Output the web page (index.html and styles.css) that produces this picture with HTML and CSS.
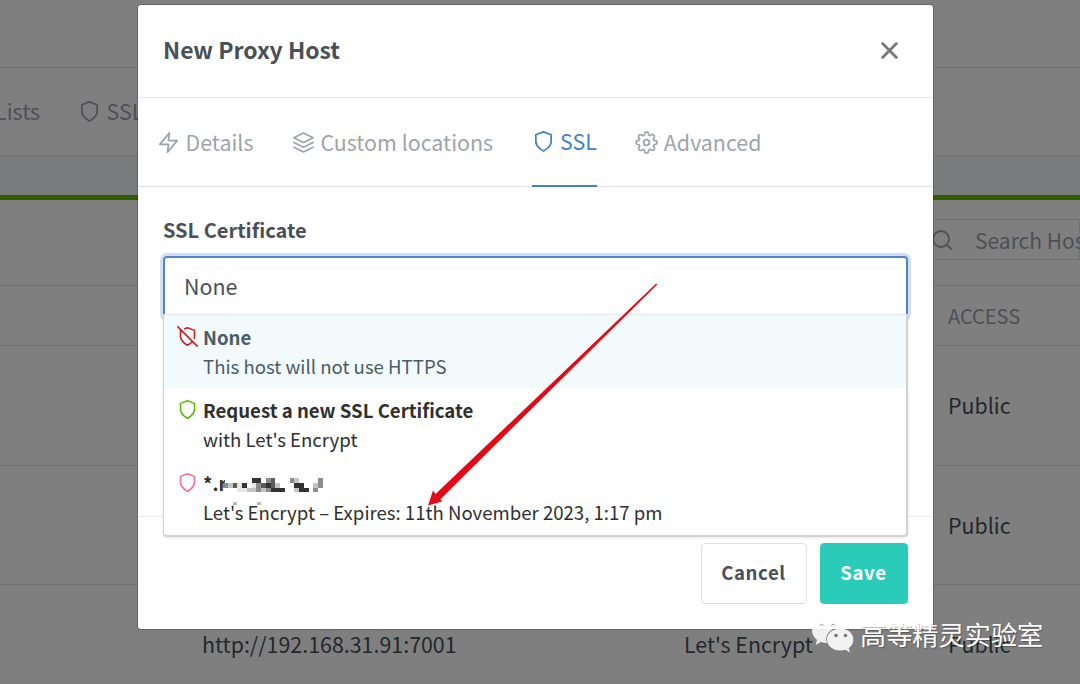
FILE: index.html
```html
<!DOCTYPE html>
<html lang="en">
<head>
<meta charset="utf-8">
<title>New Proxy Host</title>
<link rel="stylesheet" href="styles.css">
</head>
<body>
<div class="page">
  <div class="topbar"></div>
  <nav class="nav">
    <span class="nav-lists">Lists</span>
    <svg class="nav-icon" viewBox="0 0 24 24"><path d="M12 22s8-4 8-10V5l-8-3-8 3v7c0 6 8 10 8 10z"/></svg>
    <span class="nav-ssl">SSL</span>
  </nav>
  <div class="gap"></div>
  <section class="card">
    <div class="toolbar">
      <div class="search">
        <svg class="search-icon" viewBox="0 0 24 24"><circle cx="11" cy="11" r="8"/><path d="M21 21l-4.35-4.35"/></svg>
        <span class="search-text">Search Host…</span>
      </div>
    </div>
    <div class="row head"><span class="c3">ACCESS</span></div>
    <div class="row"><span class="c3">Public</span></div>
    <div class="row"><span class="c3">Public</span></div>
    <div class="row last"><span class="c1">http://192.168.31.91:7001</span><span class="c2">Let's Encrypt</span><span class="c3">Public</span></div>
  </section>
</div>

<div class="overlay">
  <div class="modal">
    <header class="modal-head">
      <h1 class="title">New Proxy Host</h1>
      <svg class="close" viewBox="0 0 16 16"><path d="M1.500 1.500l13 13M14.500 1.500l-13 13"/></svg>
    </header>
    <div class="tabs">
      <div class="tab tab-details"><svg class="ti" viewBox="0 0 24 24"><path d="M13 2L3 14h9l-1 8 10-12h-9l1-8z"/></svg><span>Details</span></div>
      <div class="tab tab-custom"><svg class="ti" viewBox="0 0 24 24"><path d="M12 2L2 7l10 5 10-5-10-5zM2 17l10 5 10-5M2 12l10 5 10-5"/></svg><span>Custom locations</span></div>
      <div class="tab tab-ssl"><svg class="ti" viewBox="0 0 24 24"><path d="M12 22s8-4 8-10V5l-8-3-8 3v7c0 6 8 10 8 10z"/></svg><span>SSL</span></div>
      <div class="tab tab-advanced"><svg class="ti" viewBox="0 0 24 24"><circle cx="12" cy="12" r="3"/><path d="M19.4 15a1.65 1.65 0 0 0 .33 1.82l.06.06a2 2 0 0 1 0 2.83 2 2 0 0 1-2.83 0l-.06-.06a1.65 1.65 0 0 0-1.82-.33 1.65 1.65 0 0 0-1 1.51V21a2 2 0 0 1-2 2 2 2 0 0 1-2-2v-.09A1.65 1.65 0 0 0 9 19.4a1.65 1.65 0 0 0-1.82.33l-.06.06a2 2 0 0 1-2.83 0 2 2 0 0 1 0-2.83l.06-.06a1.65 1.65 0 0 0 .33-1.82 1.65 1.65 0 0 0-1.51-1H3a2 2 0 0 1-2-2 2 2 0 0 1 2-2h.09A1.65 1.65 0 0 0 4.6 9a1.65 1.65 0 0 0-.33-1.82l-.06-.06a2 2 0 0 1 0-2.83 2 2 0 0 1 2.83 0l.06.06a1.65 1.65 0 0 0 1.82.33H9a1.65 1.65 0 0 0 1-1.51V3a2 2 0 0 1 2-2 2 2 0 0 1 2 2v.09a1.65 1.65 0 0 0 1 1.51 1.65 1.65 0 0 0 1.82-.33l.06-.06a2 2 0 0 1 2.83 0 2 2 0 0 1 0 2.83l-.06.06a1.65 1.65 0 0 0-.33 1.82V9a1.65 1.65 0 0 0 1.51 1H21a2 2 0 0 1 2 2 2 2 0 0 1-2 2h-.09a1.65 1.65 0 0 0-1.51 1z"/></svg><span>Advanced</span></div>
    </div>
    <div class="modal-body">
      <label class="label">SSL Certificate</label>
      <div class="select">
        <div class="select-input"><span>None</span></div>
        <div class="dropdown">
          <div class="option active">
            <svg class="oi red" viewBox="0 0 24 24"><path d="M19.690 14a6.900 6.900 0 0 0 .31-2V5l-8-3-3.160 1.180M4.730 4.730L4 5v7c0 6 8 10 8 10a20.290 20.290 0 0 0 5.620-4.380M1 1l22 22"/></svg>
            <div><div class="ot">None</div><div class="od">This host will not use HTTPS</div></div>
          </div>
          <div class="option">
            <svg class="oi green" viewBox="0 0 24 24"><path d="M12 22s8-4 8-10V5l-8-3-8 3v7c0 6 8 10 8 10z"/></svg>
            <div><div class="ot">Request a new SSL Certificate</div><div class="od">with Let's Encrypt</div></div>
          </div>
          <div class="option">
            <svg class="oi pink" viewBox="0 0 24 24"><path d="M12 22s8-4 8-10V5l-8-3-8 3v7c0 6 8 10 8 10z"/></svg>
            <div>
              <div class="ot domain">*.r
                <svg class="mosaic" viewBox="0 0 21 3" preserveAspectRatio="none">
                  <path fill="#fff" d="M.5 0h20.500v3h-20.500z"/>
                  <path fill="#333" d="M6 0h2v1h-2zM4 1h1v1h-1zM9 1h1v1h-1zM15 1h2v1h-2zM10 2h3v1h-3zM16 2h2v1h-2z"/>
                  <path fill="#5c5c5c" d="M10 0h1v1h-1zM2 1h1v1h-1zM8 1h1v1h-1zM10 1h1v1h-1z"/>
                  <path fill="#8c8c8c" d="M9 0h1v1h-1zM14 0h1v1h-1zM20 0h1v1h-1zM0 1h1v1h-1zM7 1h1v1h-1zM20 1h1v1h-1zM7 2h1v1h-1zM9 2h1v1h-1zM19 2h1v1h-1z"/>
                  <path fill="#c4c4c4" d="M15 0h1v1h-1zM1 1h1v1h-1zM11 1h1v1h-1zM19 1h1v1h-1zM5 2h2v1h-2zM8 2h1v1h-1zM15 2h1v1h-1z"/>
                  <path fill="#e6e6e6" d="M3 1h1v1h-1zM6 1h1v1h-1zM3 2h2v1h-2z"/>
                  <path fill="#b8b8b8" d="M2.100 5.100h.9v.5h-.9zM7.100 5.100h.9v.5h-.9z"/>
                </svg>
              </div>
              <div class="od">Let's Encrypt – Expires: 11th November 2023, 1:17 pm</div>
            </div>
          </div>
        </div>
      </div>
    </div>
    <footer class="modal-foot">
      <div class="btn cancel">Cancel</div>
      <div class="btn save">Save</div>
    </footer>
  </div>
</div>

<svg class="arrow" viewBox="0 0 1080 684"><path d="M656.200 283.600L657.300 284.500L440.500 499.200L442 501.500L428 505.500L433 490.500L435.500 494Z" fill="#e30a17"/></svg>

<div class="watermark">
  <svg class="wechat" viewBox="0 0 44 36">
    <path d="M16 1C7 1 1 6.500 1 13.500c0 4 2 7 5 9.500l-1.500 5 5.500-3c2 .6 4 .9 6 .9l-.8-3.400c0-6 5-11.800 14.800-11.900C29 5 23 1 16 1z" fill="#fff" fill-opacity=".88"/>
    <path d="M29.500 11.500C21.500 11.500 16 16.500 16 22.500S21.500 33.500 29.500 33.500c1.700 0 3.300-.2 4.800-.7l4.700 2.700-1.300-4.300c2.800-2 4.600-5 4.600-8.700 0-6-5-11-12.800-11z" fill="#f2f2f2"/>
    <g fill="#777"><circle cx="25" cy="18.500" r="1.800"/><circle cx="34.500" cy="18.500" r="1.800"/></g>
    <g fill="none" stroke="#999" stroke-width="1"><path d="M9 8.500a1.800 1.800 0 0 1 3.400-.2M20.500 8.500a1.800 1.800 0 0 1 3.400-.2"/></g>
  </svg>
  <span>高等精灵实验室</span>
</div>
</body>
</html>
```
FILE: styles.css
```css
* { box-sizing: border-box; }
body {
  margin: 0;
  width: 1080px;
  height: 684px;
  overflow: hidden;
  position: relative;
  background: #f5f7fb;
  color: #495057;
  font: 21.400px/30px "Noto Sans CJK SC", "Open Sans", sans-serif;
  white-space: nowrap;
}
svg { fill: none; stroke: currentColor; stroke-width: 1.800; stroke-linecap: round; stroke-linejoin: round; flex: none; display: block; }

.page { height: 684px; overflow: hidden; }
.topbar { height: 68px; background: #fff; border-bottom: 1px solid #e0e2e6; }
.nav { height: 88px; display: flex; align-items: center; background: #fff; border-bottom: 1px solid #e0e2e6; color: #9aa0ac; }
.nav span { padding-bottom: 1px; }
.nav-lists { width: 40px; display: flex; justify-content: flex-end; }
.nav-icon { width: 23px; height: 23px; margin: 0 6px 0 37.500px; }
.gap { height: 39px; }
.card { background: #fff; border-top: 5px solid #5eba00; }
.toolbar { height: 86px; border-bottom: 1px solid #e0e2e6; padding-top: 19px; }
.search { height: 41px; margin-left: 900px; border: 1px solid #e0e2e6; display: flex; align-items: center; color: #9aa0ac; font-size: 21px; }
.search-icon { width: 24px; height: 24px; margin: 0 21px 0 29px; }
.row { height: 119.500px; display: grid; grid-template-columns: 482px 264px 1fr; padding-left: 202px; align-items: center; border-bottom: 1px solid #e0e2e6; }
.head { height: 60px; color: #9aa0ac; font-size: 20px; }
.last { padding-bottom: 1px; }
.c1 { grid-column: 1; }
.c2 { grid-column: 2; }
.c3 { grid-column: 3; }

.overlay { position: absolute; inset: 0; background: rgba(0,0,0,.5); padding: 5px 0 0 137.500px; }
.modal { width: 795.500px; height: 624px; background: #fff; border-radius: 3px; box-shadow: 0 0 0 1px rgba(0,0,0,.2); }
.modal-head { height: 93px; display: flex; justify-content: space-between; align-items: center; padding: 0 35.500px 3px 25.500px; border-bottom: 1px solid #e6e7ea; }
.title { margin: 0; padding-bottom: 2px; font-size: 22.900px; font-weight: 700; }
.close { width: 17px; height: 17px; color: #777; stroke-width: 2.600; position: relative; top: .5px; }

.tabs { height: 89px; display: flex; padding: 0 0 0 19.500px; border-bottom: 1px solid #dfe1e5; color: #9fa4aa; }
.tab { display: flex; align-items: center; height: 89px; gap: 5.500px; padding-bottom: 1px; }
.tab span { padding-bottom: 1px; }
.ti { width: 23px; height: 23px; }
.tab-custom { margin-left: 38.500px; }
.tab-ssl { margin-left: 38.500px; color: #467fcf; border-bottom: 2px solid #467fcf; padding-bottom: 0; }
.tab-advanced { margin-left: 38.500px; }

.modal-body { height: 330px; padding: 28px 25.500px 0 25.500px; border-bottom: 1px solid #e6e7ea; }
.label { display: block; font-size: 20px; font-weight: 700; height: 41px; }
.select { width: 745px; position: relative; }
.select-input { height: 62px; border: 2px solid #4f84cd; border-radius: 4px; box-shadow: 0 0 0 3px rgba(70,127,207,.25); padding: 13px 19px; }
.dropdown { position: absolute; left: 0; top: 58px; width: 745px; background: #fff; border: 1px solid #d0d2d5; border-top-color: #e4e6e8; border-width: 1px 2px 2px 1px; border-radius: 0 0 4px 4px; box-shadow: 0 1px 3px rgba(0,0,0,.1); color: #303030; }
.option { height: 73.300px; display: flex; padding: 6.500px 0 0 13px; gap: 5px; font-size: 18.600px; line-height: 29px; }
.active { background: #f3fafc; color: #495c68; }
.oi { width: 21px; height: 21px; margin-top: 4px; }
.ot { font-weight: 700; }
.domain { position: relative; width: 130px; }
.mosaic { position: absolute; left: 19.500px; top: 9.500px; width: 100px; height: 14.300px; overflow: visible; stroke: none; shape-rendering: crispEdges; }
.red { color: #cd201f; }
.green { color: #5eba00; }
.pink { color: #f66d9b; }

.modal-foot { display: flex; justify-content: flex-end; gap: 13px; padding: 25.500px 25.500px 0 0; }
.btn { height: 61px; border-radius: 4px; border: 1px solid #dee0e4; display: flex; align-items: center; justify-content: center; font-weight: 700; font-size: 18.600px; letter-spacing: .6px; padding-bottom: 2px; }
.cancel { width: 106px; }
.save { width: 88px; background: #2bcbba; border-color: #2bcbba; color: #fff; }

.arrow { position: absolute; left: 0; top: 0; width: 1080px; height: 684px; stroke: none; }
.watermark { position: absolute; left: 811px; top: 617px; display: flex; align-items: flex-start; gap: 5px; color: #fff; font-size: 26.200px; line-height: 34px; text-shadow: 1px 1px 1px rgba(0,0,0,.3); }
.wechat { width: 44px; height: 36px; stroke: none; }
```
